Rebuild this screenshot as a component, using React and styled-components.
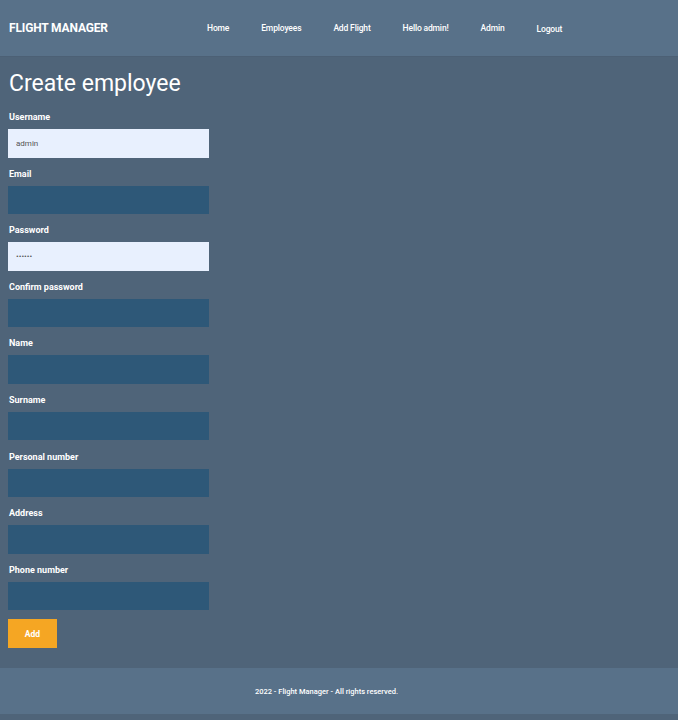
import React from 'react'
import styled, { createGlobalStyle } from 'styled-components'

const GlobalStyle = createGlobalStyle`
html, body {
  margin: 0;
  padding: 0;
  background: #4f6479;
  font-family: Roboto, "Liberation Sans", sans-serif;
  color: #ffffff;
}
`

const Page = styled.div`
min-height: 720px;
display: flex;
flex-direction: column;
`

const Header = styled.header`
height: 56px;
background: #587189;
display: flex;
align-items: center;
padding: 0 9px;
border-bottom: 1px solid #4c6075;
`

const Logo = styled.div`
font-size: 12px;
font-weight: 700;
width: 198px;
letter-spacing: -0.15px;
`

const Nav = styled.nav`
display: flex;
gap: 32px;
`

const NavLink = styled.a`
font-size: 8.5px;
font-weight: 500;
letter-spacing: -0.15px;
color: #ffffff;
text-decoration: none;
position: relative;
top: ${p => (p.$low ? '1px' : '0')};
`

const Main = styled.main`
flex: 1;
padding: 9px 8px 15px;
`

const Title = styled.h1`
font-size: 23px;
font-weight: 400;
margin: 0 0 9px 1px;
line-height: 36px;
`

const Form = styled.form`
display: flex;
flex-direction: column;
width: 201px;
`

const Field = styled.div`
display: flex;
flex-direction: column;
margin-bottom: 10.1px;
`

const Label = styled.label`
font-size: 9px;
font-weight: 700;
line-height: 12px;
margin: 0 0 6px 1px;
`

const Input = styled.input`
height: 28.5px;
box-sizing: border-box;
border: none;
outline: none;
padding: 0 8px;
font-family: Roboto, "Liberation Sans", sans-serif;
font-size: 8px;
color: #555;
background: ${p => (p.$filled ? '#e8f0fe' : '#2e5878')};
`

const Button = styled.button`
margin-top: -1px;
width: 49px;
height: 29px;
border: none;
background: #f5a623;
color: #ffffff;
font-family: Roboto, "Liberation Sans", sans-serif;
font-size: 8.5px;
font-weight: 700;
cursor: pointer;
`

const Footer = styled.footer`
height: 46px;
background: #587189;
display: flex;
align-items: center;
justify-content: center;
padding-right: 25px;
font-size: 7.5px;
font-weight: 500;
margin-bottom: 6px;
`

const fields = [
  { label: 'Username', value: 'admin', filled: true },
  { label: 'Email' },
  { label: 'Password', filled: true, type: 'password' },
  { label: 'Confirm password' },
  { label: 'Name' },
  { label: 'Surname' },
  { label: 'Personal number' },
  { label: 'Address' },
  { label: 'Phone number' },
]

const App = () => {
  return (
    <Page>
      <GlobalStyle />
      <Header>
        <Logo>FLIGHT MANAGER</Logo>
        <Nav>
          <NavLink href="#">Home</NavLink>
          <NavLink href="#">Employees</NavLink>
          <NavLink href="#">Add Flight</NavLink>
          <NavLink href="#">Hello admin!</NavLink>
          <NavLink href="#">Admin</NavLink>
          <NavLink href="#" $low>Logout</NavLink>
        </Nav>
      </Header>
      <Main>
        <Title>Create employee</Title>
        <Form onSubmit={e => e.preventDefault()}>
          {fields.map(f => (
            <Field key={f.label}>
              <Label>{f.label}</Label>
              <Input $filled={f.filled} defaultValue={f.type === 'password' ? 'secret' : f.value} type={f.type || 'text'} />
            </Field>
          ))}
          <Button>Add</Button>
        </Form>
      </Main>
      <Footer>2022 - Flight Manager - All rights reserved.</Footer>
    </Page>
  )
}

export default App
